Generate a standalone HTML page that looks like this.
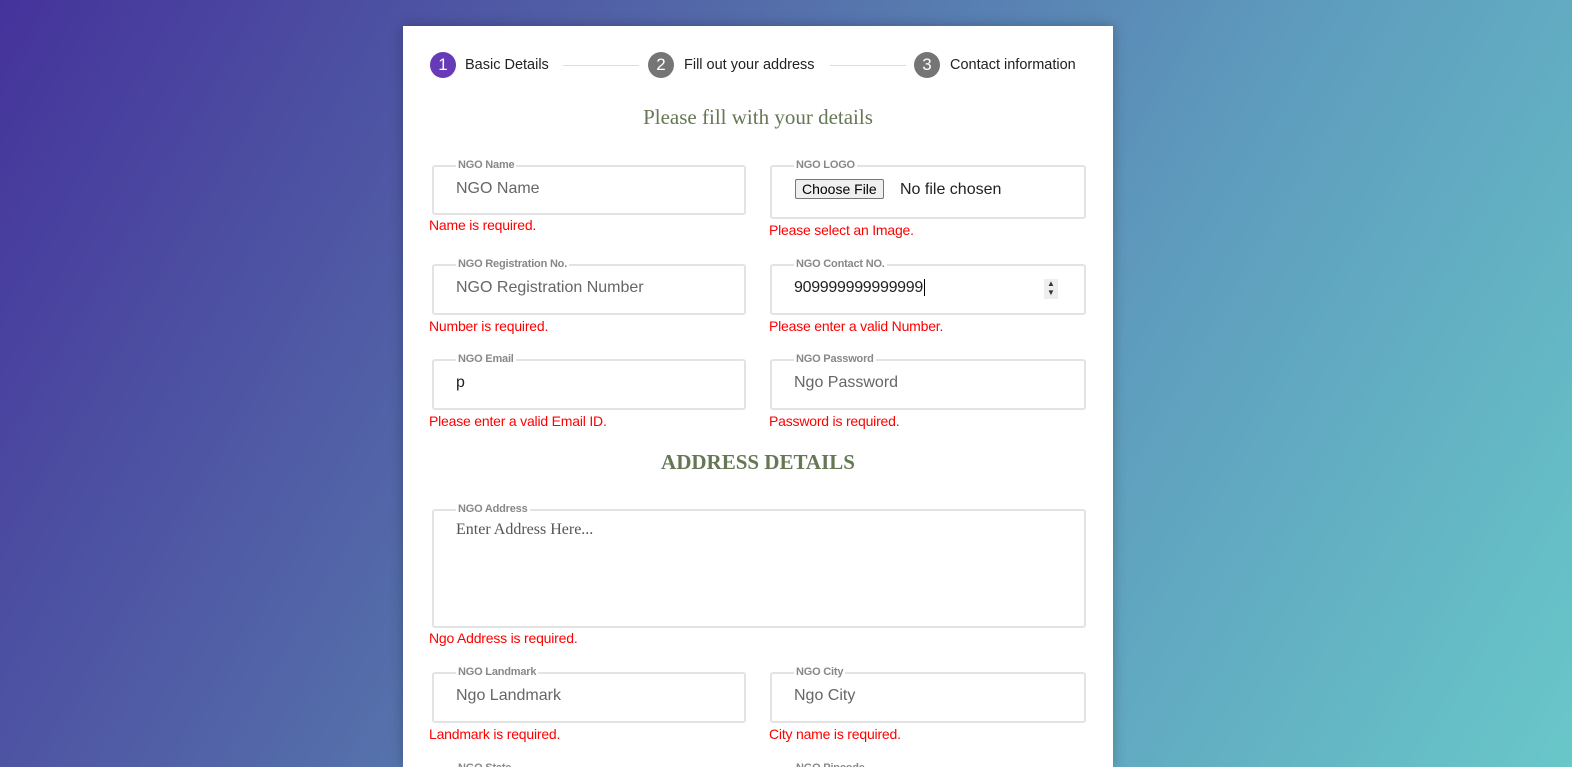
<!DOCTYPE html>
<html><head><style>
*{margin:0;padding:0;box-sizing:border-box}
html,body{width:1572px;height:767px;overflow:hidden}
body{background:linear-gradient(120deg,#45339b 0%,#5368a8 35%,#5e9bbd 65%,#68c7c9 100%);font-family:"Liberation Sans",sans-serif;position:relative}
.card{position:absolute;left:403px;top:26px;width:710px;height:741px;overflow:hidden;background:#fff;box-shadow:0 0 12px rgba(0,0,0,.25)}
.a{position:absolute}
.circ{width:26px;height:26px;border-radius:50%;color:#fff;font-size:17px;text-align:center;line-height:26px}
.st{font-size:14.5px;color:#222}
.line{height:1px;background:#ddd}
.box{position:absolute;border:2px solid #e3e3e3;border-radius:3px}
.lg{position:absolute;top:-8px;left:22px;background:#fff;padding:0 2px;font-size:11px;font-weight:bold;color:#888;line-height:13px;letter-spacing:-.2px}
.ph{position:absolute;left:22px;font-size:16px;color:#666}
.err{position:absolute;font-size:14px;color:#f00;letter-spacing:-.2px}
</style></head><body>
<div class="card">
<div class="a circ" style="left:27px;top:26px;background:#673ab7">1</div>
<div class="a st" style="left:62px;top:31px">Basic Details</div>
<div class="a line" style="left:160px;top:39px;width:76px"></div>
<div class="a circ" style="left:245px;top:26px;background:#757575">2</div>
<div class="a st" style="left:281px;top:31px">Fill out your address</div>
<div class="a line" style="left:427px;top:39px;width:76px"></div>
<div class="a circ" style="left:511px;top:26px;background:#757575">3</div>
<div class="a st" style="left:547px;top:31px">Contact information</div>
<div class="a" style="left:0;width:710px;top:79px;text-align:center;font-family:'Liberation Serif',serif;font-size:21px;color:#667755">Please fill with your details</div>

<div class="box" style="left:29px;top:139px;width:314px;height:50px"><span class="lg">NGO Name</span><span class="ph" style="top:13px">NGO Name</span></div>
<div class="err" style="left:26px;top:191px">Name is required.</div>
<div class="box" style="left:367px;top:139px;width:316px;height:54px"><span class="lg">NGO LOGO</span>
<span class="a" style="left:23px;top:12px;border:1px solid #777;background:#efefef;border-radius:2px;font-size:14px;padding:1px 6px;color:#000">Choose File</span><span class="a" style="left:128px;top:14px;font-size:16px;color:#222">No file chosen</span></div>
<div class="err" style="left:366px;top:196px">Please select an Image.</div>

<div class="box" style="left:29px;top:238px;width:314px;height:51px"><span class="lg">NGO Registration No.</span><span class="ph" style="top:13px">NGO Registration Number</span></div>
<div class="err" style="left:26px;top:292px">Number is required.</div>
<div class="box" style="left:367px;top:238px;width:316px;height:51px"><span class="lg">NGO Contact NO.</span><span class="ph" style="top:13px;color:#222;letter-spacing:-.3px">909999999999999<span style="border-left:1px solid #000;margin-left:1px"></span></span>
<span class="a" style="left:272px;top:13px;width:14px;height:20px;background:#eee;font-size:8px;line-height:9px;text-align:center;color:#333">▲<br>▼</span></div>
<div class="err" style="left:366px;top:292px">Please enter a valid Number.</div>

<div class="box" style="left:29px;top:333px;width:314px;height:51px"><span class="lg">NGO Email</span><span class="ph" style="top:13px;color:#222">p</span></div>
<div class="err" style="left:26px;top:387px">Please enter a valid Email ID.</div>
<div class="box" style="left:367px;top:333px;width:316px;height:51px"><span class="lg">NGO Password</span><span class="ph" style="top:13px">Ngo Password</span></div>
<div class="err" style="left:366px;top:387px">Password is required.</div>

<div class="a" style="left:0;width:710px;top:424px;text-align:center;font-family:'Liberation Serif',serif;font-size:21px;font-weight:bold;color:#667755">ADDRESS DETAILS</div>

<div class="box" style="left:29px;top:483px;width:654px;height:119px"><span class="lg">NGO Address</span><span class="ph" style="top:10px;font-family:'Liberation Serif',serif;color:#555;font-size:16px">Enter Address Here...</span></div>
<div class="err" style="left:26px;top:604px">Ngo Address is required.</div>

<div class="box" style="left:29px;top:646px;width:314px;height:51px"><span class="lg">NGO Landmark</span><span class="ph" style="top:13px">Ngo Landmark</span></div>
<div class="err" style="left:26px;top:700px">Landmark is required.</div>
<div class="box" style="left:367px;top:646px;width:316px;height:51px"><span class="lg">NGO City</span><span class="ph" style="top:13px">Ngo City</span></div>
<div class="err" style="left:366px;top:700px">City name is required.</div>
<div class="box" style="left:29px;top:742px;width:314px;height:51px"><span class="lg">NGO State</span></div>
<div class="box" style="left:367px;top:742px;width:316px;height:51px"><span class="lg">NGO Pincode</span></div>
</div>
</body></html>
